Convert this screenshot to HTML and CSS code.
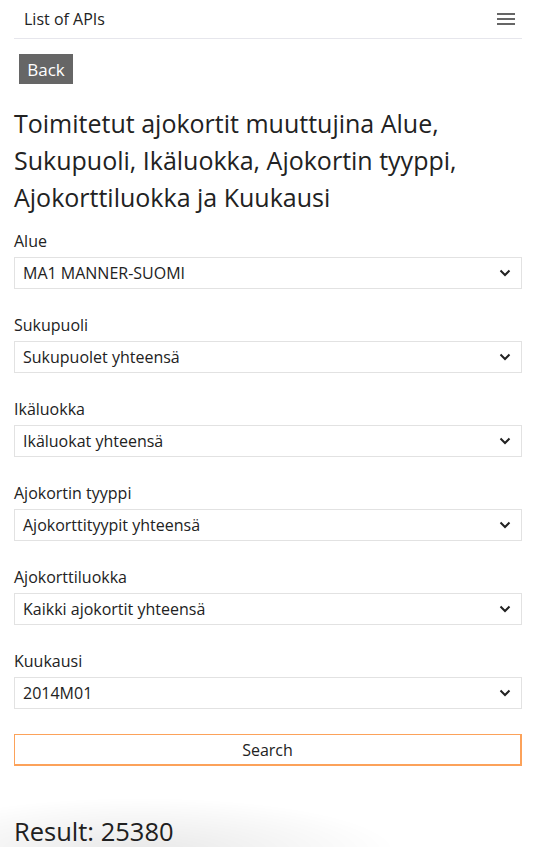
FILE: index.html
```html
<!DOCTYPE html>
<html lang="fi">
<head>
<meta charset="utf-8">
<title>List of APIs</title>
<link rel="stylesheet" href="styles.css">
</head>
<body>
<div class="page">
  <header class="topbar">
    <span class="brand">List of APIs</span>
    <span class="menu" aria-label="menu"><i></i><i></i><i></i></span>
  </header>
  <button class="back">Back</button>
  <h1 class="title">Toimitetut ajokortit muuttujina Alue, Sukupuoli, Ikäluokka, Ajokortin tyyppi, Ajokorttiluokka ja Kuukausi</h1>
  <form class="form">
    <div class="field">
      <label class="label">Alue</label>
      <div class="select"><span>MA1 MANNER-SUOMI</span><svg class="chev" viewBox="0 0 12 8"><path d="M1.5 1.5 6 6l4.5-4.5" /></svg></div>
    </div>
    <div class="field">
      <label class="label">Sukupuoli</label>
      <div class="select"><span>Sukupuolet yhteensä</span><svg class="chev" viewBox="0 0 12 8"><path d="M1.5 1.5 6 6l4.5-4.5" /></svg></div>
    </div>
    <div class="field">
      <label class="label">Ikäluokka</label>
      <div class="select"><span>Ikäluokat yhteensä</span><svg class="chev" viewBox="0 0 12 8"><path d="M1.5 1.5 6 6l4.5-4.5" /></svg></div>
    </div>
    <div class="field">
      <label class="label">Ajokortin tyyppi</label>
      <div class="select"><span>Ajokorttityypit yhteensä</span><svg class="chev" viewBox="0 0 12 8"><path d="M1.5 1.5 6 6l4.5-4.5" /></svg></div>
    </div>
    <div class="field">
      <label class="label">Ajokorttiluokka</label>
      <div class="select"><span>Kaikki ajokortit yhteensä</span><svg class="chev" viewBox="0 0 12 8"><path d="M1.5 1.5 6 6l4.5-4.5" /></svg></div>
    </div>
    <div class="field">
      <label class="label">Kuukausi</label>
      <div class="select"><span>2014M01</span><svg class="chev" viewBox="0 0 12 8"><path d="M1.5 1.5 6 6l4.5-4.5" /></svg></div>
    </div>
    <div class="search">Search</div>
  </form>
  <h2 class="result">Result: 25380</h2>
</div>
<div class="shade"></div>
</body>
</html>
```
FILE: styles.css
```css
html, body {
  margin: 0;
  padding: 0;
  background: #fff;
}
body {
  font-family: "Open Sans", "Noto Sans", sans-serif;
  color: #212529;
  overflow: hidden;
}
.page {
  padding: 0 13px 0 14px;
}
.topbar {
  display: flex;
  justify-content: space-between;
  align-items: center;
  height: 38px;
  border-bottom: 1px solid #e6e6ec;
  padding: 0 7px 0 10px;
}
.brand {
  font-size: 16px;
  color: #222;
}
.menu {
  display: flex;
  flex-direction: column;
  gap: 3px;
  width: 18px;
  margin-top: -1px;
}
.menu i {
  display: block;
  height: 2px;
  background: #666;
}
.back {
  display: block;
  margin: 15px 0 0 5px;
  height: 30px;
  width: 54px;
  padding: 0;
  border: 0;
  background: #666;
  color: #fff;
  font-family: inherit;
  font-size: 17px;
}
.title {
  font-size: 25px;
  font-weight: 400;
  line-height: 37px;
  margin: 21px 0 0 0;
  color: #222;
}
.form {
  margin-top: 14px;
}
.field {
  margin-bottom: 25px;
}
.label {
  display: block;
  font-size: 16px;
  line-height: 22px;
  margin-bottom: 5px;
  color: #222;
}
.select {
  display: flex;
  justify-content: space-between;
  align-items: center;
  height: 30px;
  border: 1px solid #e2e2e2;
  padding: 0 10px 0 8px;
  font-size: 16px;
  color: #222;
}
.chev {
  width: 12px;
  height: 8px;
  fill: none;
  stroke: #222;
  stroke-width: 2;
}
.search {
  height: 29px;
  border: 2px solid #fca25a;
  border-top-width: 1px;
  border-left-width: 1px;
  display: flex;
  align-items: center;
  justify-content: center;
  font-size: 16px;
  color: #222;
  margin-top: 0;
}
.result {
  font-size: 25.5px;
  font-weight: 400;
  margin: 50px 0 0 0;
  line-height: 30px;
  color: #222;
}
.shade {
  position: fixed;
  left: -120px;
  bottom: -60px;
  width: 520px;
  height: 110px;
  pointer-events: none;
  background: radial-gradient(ellipse at center, rgba(0,0,0,0.09), rgba(0,0,0,0) 70%);
}
```
